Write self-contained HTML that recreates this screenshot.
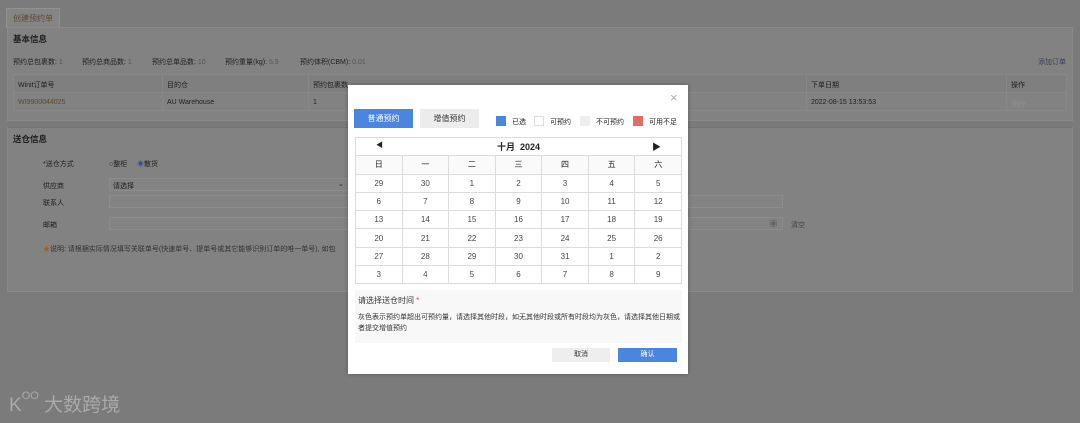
<!DOCTYPE html>
<html><head><meta charset="utf-8"><style>
*{box-sizing:border-box;margin:0;padding:0}
body{width:1080px;height:423px;background:#7b7b7b;font-family:"Liberation Sans","Noto Sans CJK SC",sans-serif;position:relative;overflow:hidden;color:#1e1e1e;font-size:7px}
.a{position:absolute;white-space:nowrap}
.panel{position:absolute;background:#828282;border:1px solid #8a8a8a}
.inp{position:absolute;border:1px solid #8c8c8c;background:#838383;height:13px}
table.cal{position:absolute;left:355px;top:137px;width:327px;border-collapse:collapse;font-size:8px;color:#444}
table.cal td{border:1px solid #dcdcdc;text-align:center;height:18.3px;padding:0}
</style></head><body>
<div class="a" style="left:6px;top:8px;width:54px;height:20px;background:#858585;border:1px solid #919191;border-bottom:none;color:#5a4a30;font-size:8px;line-height:19px;text-align:center">创建预约单</div>
<div class="panel" style="left:7px;top:27px;width:1066px;height:94px"></div>
<div class="a" style="left:13px;top:33px;font-size:8.5px;font-weight:bold">基本信息</div>
<div class="a" style="left:13px;top:57px;color:#222">预约总包裹数: <span style="color:#555">1</span></div>
<div class="a" style="left:82px;top:57px">预约总商品数: <span style="color:#555">1</span></div>
<div class="a" style="left:152px;top:57px">预约总单品数: <span style="color:#555">10</span></div>
<div class="a" style="left:225px;top:57px">预约重量(kg): <span style="color:#555">5.9</span></div>
<div class="a" style="left:300px;top:57px">预约体积(CBM): <span style="color:#555">0.01</span></div>
<div class="a" style="left:1038px;top:57px;color:#33405a">添加订单</div>
<div class="a" style="left:13px;top:74px;width:1054px;height:19px;background:#7f7f80;border:1px solid #888"></div>
<div class="a" style="left:13px;top:93px;width:1054px;height:18px;border:1px solid #888;border-top:none"></div>
<div class="a" style="left:162px;top:74px;width:1px;height:37px;background:#888"></div>
<div class="a" style="left:308px;top:74px;width:1px;height:37px;background:#888"></div>
<div class="a" style="left:806px;top:74px;width:1px;height:37px;background:#888"></div>
<div class="a" style="left:1006px;top:74px;width:1px;height:37px;background:#888"></div>
<div class="a" style="left:18px;top:80px">Winit订单号</div><div class="a" style="left:167px;top:80px">目的仓</div><div class="a" style="left:313px;top:80px">预约包裹数</div>
<div class="a" style="left:811px;top:80px">下单日期</div><div class="a" style="left:1011px;top:80px">操作</div>
<div class="a" style="left:18px;top:99px;color:#5a4a2a">WI9900044025</div><div class="a" style="left:167px;top:99px">AU Warehouse</div><div class="a" style="left:313px;top:99px">1</div>
<div class="a" style="left:811px;top:99px">2022-08-15 13:53:53</div><div class="a" style="left:1012px;top:99px;color:#8f8f8f">删除</div>
<div class="panel" style="left:7px;top:127px;width:1066px;height:165px;border-top:1px solid #707088"></div>
<div class="a" style="left:13px;top:133px;font-size:8.5px;font-weight:bold">送仓信息</div>
<div class="a" style="left:43px;top:159px">*送仓方式</div>
<div class="a" style="left:109px;top:159px">○整柜 &nbsp;&nbsp;&nbsp;&nbsp;<span style="color:#2d4fa0">◉</span>散货</div>
<div class="a" style="left:43px;top:181px">供应商</div>
<div class="inp" style="left:109px;top:178px;width:240px"></div><div class="a" style="left:113px;top:181px">请选择</div><div class="a" style="left:338px;top:180px">⌄</div>
<div class="a" style="left:43px;top:198px">联系人</div><div class="inp" style="left:109px;top:195px;width:240px"></div>
<div class="a" style="left:43px;top:220px">邮箱</div><div class="inp" style="left:109px;top:217px;width:240px"></div>
<div class="inp" style="left:688px;top:195px;width:95px"></div><div class="inp" style="left:688px;top:217px;width:95px"></div>
<div class="a" style="left:770px;top:219px;color:#444">▦</div><div class="a" style="left:791px;top:220px;color:#444">清空</div>
<div class="a" style="left:43px;top:244px;color:#333"><span style="color:#a0601a">★</span>说明: 请根据实际情况填写关联单号(快速单号、提单号或其它能够识别订单的唯一单号), 如包</div>
<div class="a" style="left:9px;top:390px;font-size:19px;color:#aaa;letter-spacing:0px">K<span style="font-size:11px;vertical-align:top">OO</span> 大数跨境</div>

<div class="a" style="left:348px;top:85px;width:340px;height:289px;background:#fff;box-shadow:0 0 4px rgba(0,0,0,.3)"></div>
<div class="a" style="left:670px;top:90px;font-size:13px;color:#aaa">×</div>
<div class="a" style="left:354px;top:109px;width:59px;height:19px;background:#4a86e0;color:#fff;font-size:8px;line-height:19px;text-align:center">普通预约</div>
<div class="a" style="left:420px;top:109px;width:59px;height:19px;background:#ececec;color:#333;font-size:8px;line-height:19px;text-align:center">增值预约</div>
<div class="a" style="left:496px;top:116px;width:10px;height:10px;background:#4a86e0"></div><div class="a" style="left:512px;top:117px">已选</div>
<div class="a" style="left:534px;top:116px;width:10px;height:10px;border:1px solid #ddd"></div><div class="a" style="left:550px;top:117px">可预约</div>
<div class="a" style="left:580px;top:116px;width:10px;height:10px;background:#eee"></div><div class="a" style="left:596px;top:117px">不可预约</div>
<div class="a" style="left:633px;top:116px;width:10px;height:10px;background:#e56b66"></div><div class="a" style="left:649px;top:117px">可用不足</div>
<table class="cal">
<tr><td colspan="7" style="font-weight:bold;font-size:9px;color:#222;position:relative"><span style="position:absolute;left:20px;font-size:7px">◀</span>十月 &nbsp;2024<span style="position:absolute;right:20px">▶</span></td></tr>
<tr style="background:#fafafa;color:#222"><td>日</td><td>一</td><td>二</td><td>三</td><td>四</td><td>五</td><td>六</td></tr>
<tr><td>29</td><td>30</td><td>1</td><td>2</td><td>3</td><td>4</td><td>5</td></tr>
<tr><td>6</td><td>7</td><td>8</td><td>9</td><td>10</td><td>11</td><td>12</td></tr>
<tr><td>13</td><td>14</td><td>15</td><td>16</td><td>17</td><td>18</td><td>19</td></tr>
<tr><td>20</td><td>21</td><td>22</td><td>23</td><td>24</td><td>25</td><td>26</td></tr>
<tr><td>27</td><td>28</td><td>29</td><td>30</td><td>31</td><td>1</td><td>2</td></tr>
<tr><td>3</td><td>4</td><td>5</td><td>6</td><td>7</td><td>8</td><td>9</td></tr>
</table>
<div class="a" style="left:355px;top:290px;width:327px;height:53px;background:#f8f8f8"></div>
<div class="a" style="left:358px;top:295px;font-size:8px;color:#333">请选择送仓时间 <span style="color:#e44">*</span></div>
<div class="a" style="left:358px;top:312px;color:#333;white-space:normal;width:322px;line-height:11px">灰色表示预约单超出可预约量，请选择其他时段，如无其他时段或所有时段均为灰色，请选择其他日期或者提交增值预约</div>
<div class="a" style="left:552px;top:348px;width:58px;height:14px;background:#eee;color:#333;line-height:14px;text-align:center">取消</div>
<div class="a" style="left:618px;top:348px;width:59px;height:14px;background:#4a86e0;color:#fff;line-height:14px;text-align:center">确认</div>
</body></html>
